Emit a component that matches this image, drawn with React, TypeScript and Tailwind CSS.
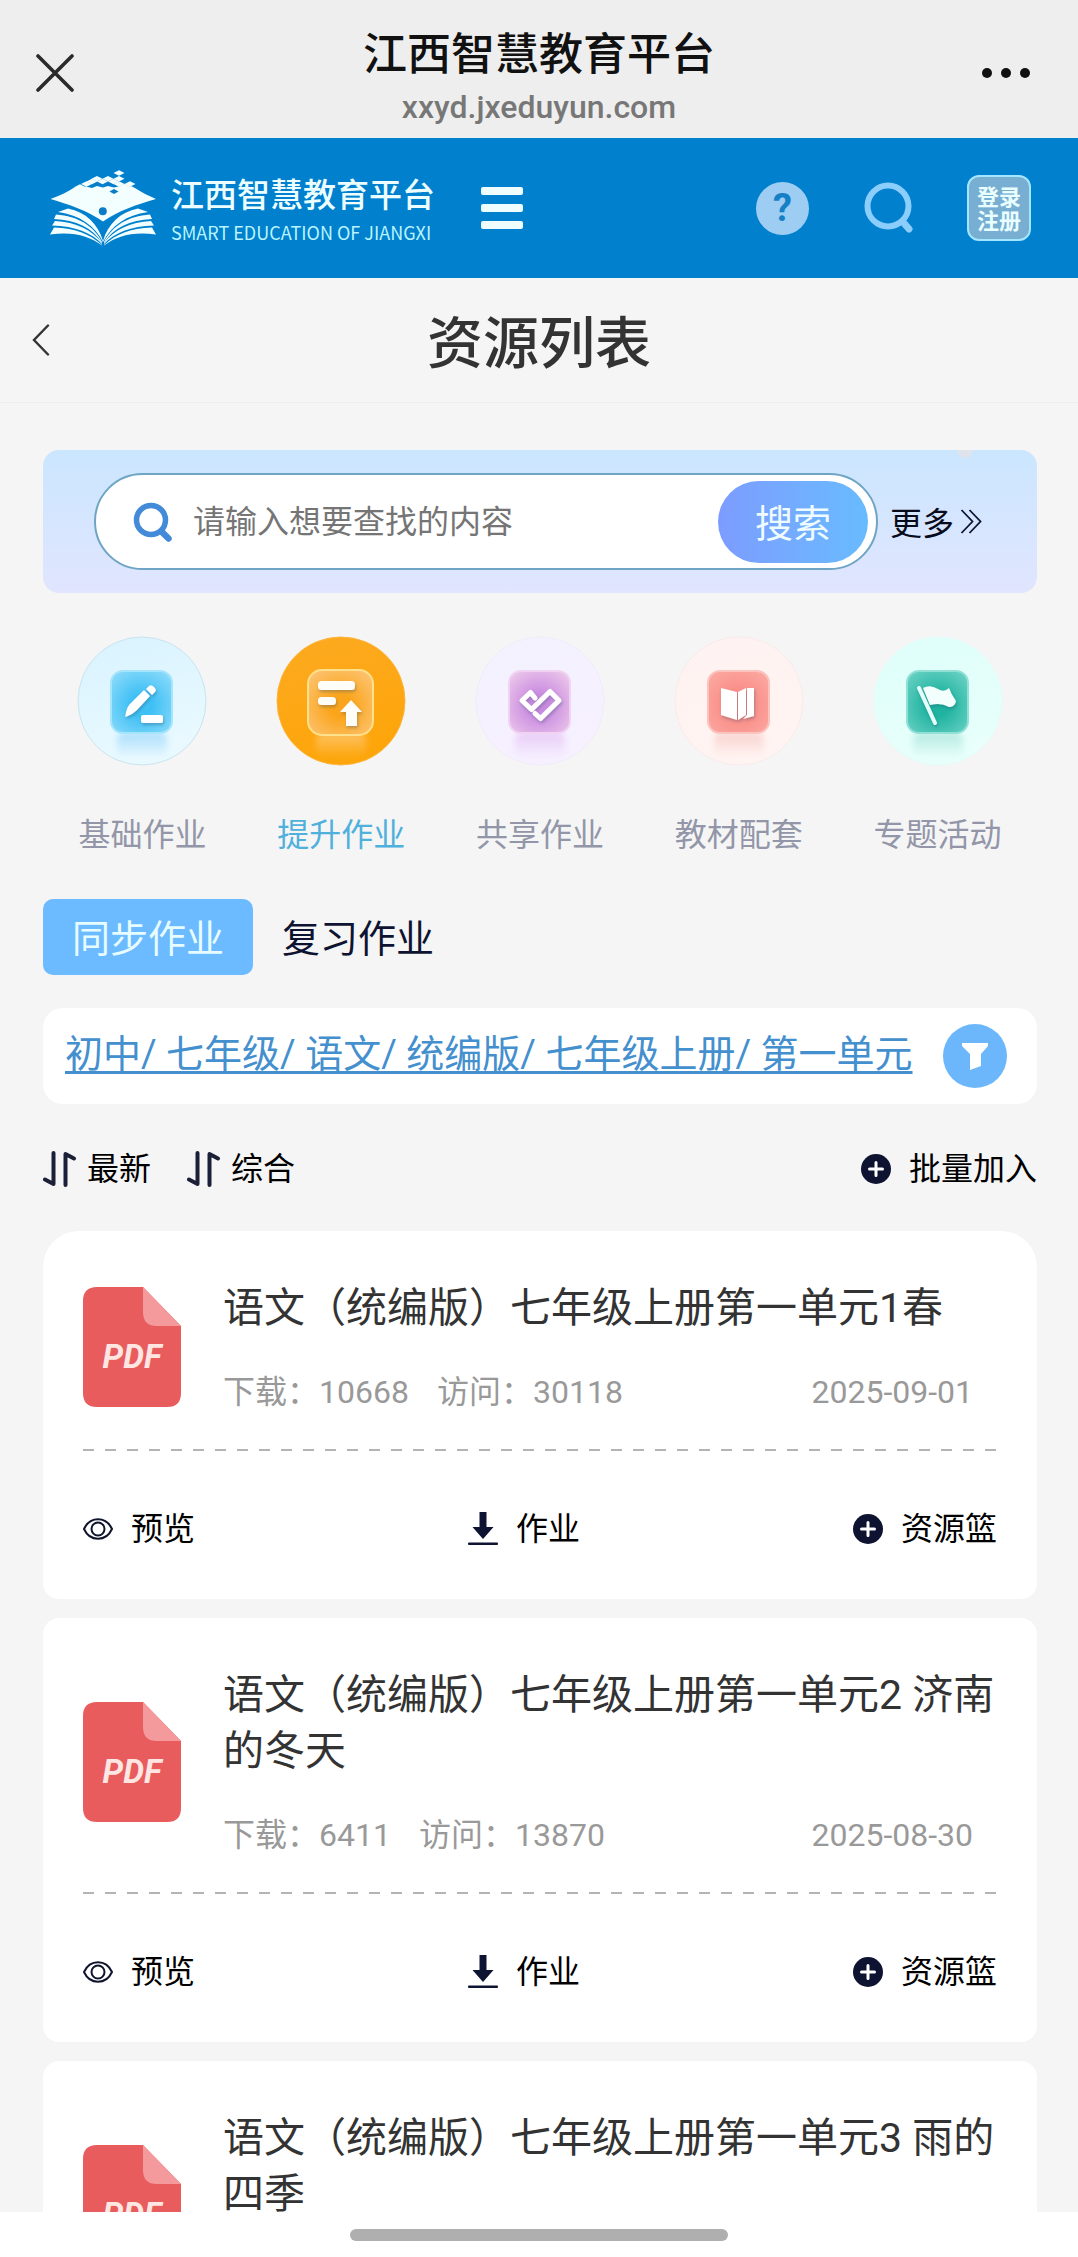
import React from "react";

function Logo() {
  const pixels = [
    [36.5, 14],
    [47, 8.7],
    [58, 8.7],
    [69, 3],
    [69, 8.7],
    [80, 14],
    [52.5, 11.5],
    [63.5, 11.5],
    [42, 11.5],
    [69, 14],
    [30, 17],
    [74.5, 16.5],
  ];
  return (
    <svg width="107" height="76" viewBox="0 0 107 76" fill="#f3feff" aria-hidden="true">
      <path d="M0.5 29 C9 26 18 22 25 17 L30 18.5 L36 16.5 L42 18 L47 16 L53 17.5 L58 16 L64 17.5 L70 16 L75 18 L81 16 L85 18 C91 22 99 26 106 29 C88 34 68 41 53 51.5 C38 41 18 34 0.5 29 Z" />
      {pixels.map(([x, y], i) => (
        <path key={i} d={`M${x - 5.5} ${y} L${x} ${y - 2.8} L${x + 5.5} ${y} L${x} ${y + 2.8} Z`} />
      ))}
      <path d="M59.5 21.5 L64 19 L68.5 21.5 L64 24 Z" fill="#0d7cc6" />
      <path d="M43.5 14 L47 12.2 L50.5 14 L47 15.8 Z M54.5 14 L58 12.2 L61.5 14 L58 15.8 Z" fill="#0d7cc6" />
      <circle cx="52.8" cy="41.3" r="4" fill="#0d7cc6" />
      <g>
        <path d="M53 71 C48 54 36 42 18 38.5 L8 42 C30 45 45 56 53 72 Z" />
        <path d="M52 72 C44 56 28 46 6 44.5 L4 49 C26 50 43 58 52 73 Z" />
        <path d="M52 73 C42 60 26 52 5 51 L2 55.5 C25 56 42 63 52 74 Z" />
        <path d="M52 75 C40 64 26 58.5 4 57.5 L0 64.5 C22 61 40 66 52 75.5 Z" />
      </g>
      <g transform="translate(106 0) scale(-1 1)">
        <path d="M53 71 C48 54 36 42 18 38.5 L8 42 C30 45 45 56 53 72 Z" />
        <path d="M52 72 C44 56 28 46 6 44.5 L4 49 C26 50 43 58 52 73 Z" />
        <path d="M52 73 C42 60 26 52 5 51 L2 55.5 C25 56 42 63 52 74 Z" />
        <path d="M52 75 C40 64 26 58.5 4 57.5 L0 64.5 C22 61 40 66 52 75.5 Z" />
      </g>
    </svg>
  );
}

type Skin = {
  id: string;
  disc: [string, string];
  rim: string;
  tile: [string, string];
  edge: string;
  glow: string;
  big?: boolean;
};

function CategoryIcon({ skin, children }: { skin: Skin; children: React.ReactNode }) {
  const t = skin.big ? { x: -33, y: -31, w: 65, h: 65, r: 14 } : { x: -31, y: -30, w: 61, h: 62, r: 12 };
  return (
    <svg width="132" height="132" viewBox="-66 -66 132 132" aria-hidden="true">
      <defs>
        <linearGradient id={`${skin.id}-disc`} x1="0" y1="0" x2="0.3" y2="1">
          <stop offset="0" stopColor={skin.disc[0]} />
          <stop offset="1" stopColor={skin.disc[1]} />
        </linearGradient>
        <radialGradient id={`${skin.id}-tile`} cx="0.5" cy="0.55" r="0.7">
          <stop offset="0.25" stopColor={skin.tile[0]} />
          <stop offset="1" stopColor={skin.tile[1]} />
        </radialGradient>
        <linearGradient id={`${skin.id}-glow`} x1="0" y1="0" x2="0" y2="1">
          <stop offset="0" stopColor={skin.glow} stopOpacity="0.7" />
          <stop offset="1" stopColor={skin.glow} stopOpacity="0" />
        </linearGradient>
        <filter id={`${skin.id}-soft`} x="-20%" y="-40%" width="140%" height="180%">
          <feGaussianBlur stdDeviation="3" />
        </filter>
        <filter id={`${skin.id}-drop`} x="-30%" y="-30%" width="160%" height="160%">
          <feDropShadow dx="1" dy="2" stdDeviation="1.5" floodColor="#204060" floodOpacity="0.3" />
        </filter>
      </defs>
      <circle r="64" fill={`url(#${skin.id}-disc)`} stroke={skin.rim} strokeWidth="1" />
      <rect x="-25" y="31" width="50" height="26" rx="8" fill={`url(#${skin.id}-glow)`} filter={`url(#${skin.id}-soft)`} />
      <rect x={t.x} y={t.y} width={t.w} height={t.h} rx={t.r} fill={`url(#${skin.id}-tile)`} stroke={skin.edge} strokeWidth="2" />
      <g filter={`url(#${skin.id}-drop)`}>{children}</g>
    </svg>
  );
}

const categories = [
  {
    label: "基础作业",
    skin: { id: "basic", disc: ["#d8f3ff", "#e9f9ff"], rim: "#c9e4ee", tile: ["#3fc0f5", "#8fdcfa"], edge: "#a5e5fc", glow: "#8ed2fa" } as Skin,
    art: (
      <g fill="#fff">
        <path d="M-16 15 Q-15 8 -12 4 L2 -10 L7 -5 L-6 9 Q-10 13 -16 15 Z" strokeLinejoin="round" stroke="#fff" strokeWidth="1.5" />
        <path d="M4 -12 L7 -15 Q9 -17 12 -14 Q15 -11 13 -9 L10 -6 Z" />
        <rect x="-1" y="14" width="22" height="8" rx="2" />
      </g>
    ),
  },
  {
    label: "提升作业",
    active: true,
    skin: { id: "raise", disc: ["#fdaa22", "#fda50a"], rim: "#fdb53a", tile: ["#fba51c", "#fdc679"], edge: "#ffe08c", glow: "#fdd08c", big: true } as Skin,
    art: (
      <g fill="#fffdf8">
        <rect x="-23" y="-20" width="37" height="9" rx="3.5" />
        <rect x="-23" y="-4" width="18" height="8" rx="3.5" />
        <path d="M10 -1 L21 11 H16 V25 H5 V11 H-1 Z" />
      </g>
    ),
  },
  {
    label: "共享作业",
    skin: { id: "share", disc: ["#f4f2ff", "#f6f0ff"], rim: "#f1ecfb", tile: ["#c98be0", "#eecbeb"], edge: "#f0d3f3", glow: "#e3b9f2" } as Skin,
    art: (
      <path
        d="M-5 -3 L-9.5 -8.5 L-18 -0.5 L-8.5 8.5 L10 -9.5 L19 -0.5 L0.5 17.5 L-5 12.5"
        fill="none"
        stroke="#fff"
        strokeWidth="5"
        strokeLinecap="round"
        strokeLinejoin="round"
      />
    ),
  },
  {
    label: "教材配套",
    skin: { id: "book", disc: ["#fff2f2", "#fff4f2"], rim: "#fbeaea", tile: ["#f98b84", "#fcaaa4"], edge: "#fbc3be", glow: "#f5c4c0" } as Skin,
    art: (
      <g fill="#fff">
        <path d="M-18 -13 L-2 -9 V19 L-18 14 Z" />
        <path d="M-1 -9 L7 -13 V14 L-1 19 Z" />
        <path d="M8 -13 H15 V15 L4 18 L8 14 Z" />
      </g>
    ),
  },
  {
    label: "专题活动",
    skin: { id: "topic", disc: ["#defffa", "#e8fffb"], rim: "#e4fdf8", tile: ["#1fb3a0", "#6ed3c6"], edge: "#90e0d5", glow: "#9edfd5" } as Skin,
    art: (
      <g fill="#f3fffd">
        <path d="M-19 -13 L-3 22" stroke="#e4fffb" strokeWidth="4" strokeLinecap="round" />
        <path d="M-15 -13 Q-8 -17 0 -12 Q6 -8 11 -13 Q13 -7 18 0 Q17 6 11 6 Q3 1 -8 4 Z" />
      </g>
    ),
  },
];

function PdfIcon() {
  return (
    <div className="relative h-[120px] w-[98px] shrink-0">
      <svg width="98" height="120" viewBox="0 0 98 120" aria-hidden="true">
        <path d="M14 0 H60 L98 39 V106 Q98 120 84 120 H14 Q0 120 0 106 V14 Q0 0 14 0 Z" fill="#e85c5d" />
        <path d="M60 0 L98 39 H74 Q60 39 60 25 Z" fill="#f49a9d" />
      </svg>
      <span className="absolute inset-x-0 top-[52px] text-center text-[33px] leading-9 font-bold text-[#ffe6e2] italic">PDF</span>
    </div>
  );
}

function PlusDot() {
  return (
    <svg width="30" height="30" viewBox="0 0 30 30" aria-hidden="true">
      <circle cx="15" cy="15" r="15" fill="#0d1330" />
      <path d="M15 8.5 V21.5 M8.5 15 H21.5" stroke="#fff" strokeWidth="3" strokeLinecap="round" />
    </svg>
  );
}

function EyeIcon() {
  return (
    <svg width="30" height="24" viewBox="0 0 30 24" fill="none" stroke="#10152e" strokeWidth="2" aria-hidden="true">
      <path d="M1 12 C7 -1 23 -1 29 12 C23 25 7 25 1 12 Z" />
      <circle cx="15" cy="12" r="6.5" />
    </svg>
  );
}

function DownloadIcon() {
  return (
    <svg width="30" height="34" viewBox="0 0 30 34" fill="#0d1330" aria-hidden="true">
      <path d="M11.5 0 H18.5 V15 H25.5 L15 27 L4.5 15 H11.5 Z" />
      <rect x="0" y="30.5" width="30" height="2.5" rx="1" />
    </svg>
  );
}

function SortIcon() {
  return (
    <svg width="34" height="36" viewBox="0 0 34 36" fill="none" stroke="#1b2038" strokeWidth="4" strokeLinecap="round" strokeLinejoin="round" aria-hidden="true">
      <path d="M10.5 2 V33 L2 28.5" />
      <path d="M22.5 34 V3 L31 7.5" />
    </svg>
  );
}

type Resource = { title: string; downloads?: number; visits?: number; date?: string };

const resources: Resource[] = [
  { title: "语文（统编版）七年级上册第一单元1春", downloads: 10668, visits: 30118, date: "2025-09-01" },
  { title: "语文（统编版）七年级上册第一单元2 济南的冬天", downloads: 6411, visits: 13870, date: "2025-08-30" },
  { title: "语文（统编版）七年级上册第一单元3 雨的四季" },
];

function ResourceCard({ item }: { item: Resource }) {
  return (
    <li className="rounded-2xl bg-white px-10 pt-[49px] pb-12 first:rounded-t-[36px]">
      <div className="flex items-center gap-[42px]">
        <PdfIcon />
        <div className="min-w-0 flex-1">
          <h2 className="text-[41px] leading-14 text-[#333]">{item.title}</h2>
          <div className="mt-[34px] flex h-11 items-center text-[32px] leading-11 text-[#999]">
            {item.date && (
              <>
                <span>下载：{item.downloads}</span>
                <span className="ml-7">访问：{item.visits}</span>
                <time className="mr-6 ml-auto">{item.date}</time>
              </>
            )}
          </div>
        </div>
      </div>
      <div className="mt-[35px] h-0.5 bg-[repeating-linear-gradient(90deg,#b4b4b4_0_11px,transparent_11px_22px)]" />
      {item.date && (
        <div className="mt-14 flex items-center justify-between text-[32px] leading-11 text-black">
          <button className="flex items-center gap-[18px]">
            <EyeIcon />
            预览
          </button>
          <button className="flex items-center gap-[18px]">
            <DownloadIcon />
            作业
          </button>
          <button className="flex items-center gap-[18px]">
            <PlusDot />
            资源篮
          </button>
        </div>
      )}
    </li>
  );
}

export default function App() {
  return (
    <div className="flex h-screen flex-col bg-[#f5f5f5] font-['Roboto','Noto_Sans_CJK_SC',sans-serif] text-[#0d1330]">
      <div className="flex h-[138px] shrink-0 items-center justify-between bg-[#eee] pt-2 pr-12 pl-9">
        <button aria-label="关闭" className="w-12">
          <svg width="38" height="38" viewBox="0 0 38 38" stroke="#2a2a2a" strokeWidth="3.6" strokeLinecap="round" aria-hidden="true">
            <path d="M2 2 L36 36 M36 2 L2 36" />
          </svg>
        </button>
        <div className="flex flex-col items-center pt-3 pl-3">
          <div className="text-[44px] leading-14 font-medium text-[#111]">江西智慧教育平台</div>
          <div className="text-[32px] leading-12 font-medium text-[#777]">xxyd.jxeduyun.com</div>
        </div>
        <button aria-label="更多选项">
          <svg width="48" height="10" viewBox="0 0 48 10" fill="#111" aria-hidden="true">
            <circle cx="5" cy="5" r="5" />
            <circle cx="24" cy="5" r="5" />
            <circle cx="43" cy="5" r="5" />
          </svg>
        </button>
      </div>

      <header className="flex h-[140px] shrink-0 items-center bg-[#0080cd] pr-[47px] pl-[50px]">
        <a href="#home" className="flex items-center gap-3.5">
          <Logo />
          <span className="flex flex-col pt-2 text-[#ecfeff]">
            <span className="text-[33px] leading-10 font-medium">江西智慧教育平台</span>
            <span className="font-['Noto_Sans_CJK_SC',sans-serif] text-[18px] leading-8 text-[#b9f4ff]">SMART EDUCATION OF JIANGXI</span>
          </span>
        </a>
        <button aria-label="菜单" className="ml-[46px] flex w-[42px] flex-col gap-[9px]">
          <span className="h-2 rounded-xs bg-[#effdff]" />
          <span className="h-2 rounded-xs bg-[#effdff]" />
          <span className="h-2 rounded-xs bg-[#effdff]" />
        </button>
        <div className="ml-auto flex items-center gap-[54px]">
          <button aria-label="帮助" className="flex size-[53px] items-center justify-center rounded-full bg-[#9ecdf3] text-[38px] leading-none font-bold text-[#1480c6]">
            ?
          </button>
          <button aria-label="搜索">
            <svg width="50" height="52" viewBox="0 0 50 52" fill="none" stroke="#8bcdfb" strokeWidth="6" strokeLinecap="round" aria-hidden="true">
              <circle cx="25" cy="24" r="20.5" />
              <path d="M40 40 L46 47" strokeWidth="7" />
            </svg>
          </button>
          <button className="flex h-[66px] w-16 flex-col items-center justify-center rounded-xl border-2 border-[#a3e6ff] bg-[#78aed2] pt-1 text-[22px] leading-6 font-bold text-[#e9feff]">
            <span>登录</span>
            <span>注册</span>
          </button>
        </div>
      </header>

      <main className="flex min-h-0 flex-1 flex-col overflow-y-auto [scrollbar-width:none]">
        <div className="flex h-[125px] shrink-0 items-center justify-between border-b border-[#eee] px-8">
          <button aria-label="返回" className="w-5">
            <svg width="18" height="32" viewBox="0 0 18 32" fill="none" stroke="#333" strokeWidth="2.4" strokeLinecap="round" aria-hidden="true">
              <path d="M16 1.5 L2 16 L16 30.5" />
            </svg>
          </button>
          <h1 className="pt-2 text-[56px] leading-20 font-medium text-[#333]">资源列表</h1>
          <span className="w-5" />
        </div>

        <div className="flex flex-col pt-[47px] pr-[41px] pb-12 pl-[43px]">
          <form className="relative flex h-[143px] items-center rounded-2xl bg-linear-to-b from-[#cae6fe] to-[#e1e5ff] pr-[55px] pl-[51px]">
            <div className="absolute top-0 right-16 h-2 w-4 rounded-b-full bg-[#f3dfd8]/50" />
            <div className="flex h-[97px] flex-1 items-center rounded-full border-2 border-[#6fa5c4] bg-white pr-2 pl-[37px]">
              <svg width="40" height="40" viewBox="0 0 40 40" fill="none" stroke="#438ad8" strokeWidth="5.5" strokeLinecap="round" aria-hidden="true">
                <circle cx="18" cy="18" r="14.5" />
                <path d="M29 30 L35.5 36.5" strokeWidth="6.5" />
              </svg>
              <input
                type="text"
                aria-label="搜索内容"
                placeholder="请输入想要查找的内容"
                className="ml-5 h-16 min-w-0 flex-1 bg-transparent text-[32px] text-[#333] outline-none placeholder:text-[#757575]"
              />
              <button type="button" className="h-[82px] w-[150px] rounded-full bg-linear-to-r from-[#7c9cff] to-[#68bbff] pt-1 text-[38px] leading-none text-[#eefcff]">
                搜索
              </button>
            </div>
            <a href="#more" className="ml-3 flex items-center gap-1.5 pt-1 text-[32px] leading-11 text-[#080b1c]">
              更多
              <svg width="22" height="26" viewBox="0 0 22 26" fill="none" stroke="#0d1330" strokeWidth="1.8" className="mb-1" aria-hidden="true">
                <path d="M1.5 1 L12.5 12.5 L1.5 24" />
                <path d="M9.5 1 L20.5 12.5 L9.5 24" />
              </svg>
            </a>
          </form>

          <nav className="mt-[42px] grid grid-cols-5">
            {categories.map((c) => (
              <a
                key={c.label}
                href={`#${c.skin.id}`}
                className={c.active ? "flex flex-col items-center text-[#50b0dc]" : "flex flex-col items-center text-[#9396a8]"}
              >
                <CategoryIcon skin={c.skin}>{c.art}</CategoryIcon>
                <span className="mt-[46px] text-[32px] leading-11">{c.label}</span>
              </a>
            ))}
          </nav>

          <div className="mt-[42px] flex text-[38px] leading-[72px]">
            <button className="rounded-[10px] bg-[#6cbaff] px-[29px] pt-1 text-[#e6fcff]">同步作业</button>
            <button className="px-[29px] pt-1">复习作业</button>
          </div>

          <div className="mt-[33px] flex h-24 items-center justify-between rounded-[20px] bg-white pr-[30px] pl-[22px]">
            <a href="#filter" className="pb-1 text-[38px] leading-14 text-[#448fce] underline decoration-[3px] underline-offset-4 [text-decoration-skip-ink:none]">
              初中/ 七年级/ 语文/ 统编版/ 七年级上册/ 第一单元
            </a>
            <button aria-label="筛选" className="flex size-16 items-center justify-center rounded-full bg-[#6cb7fb]">
              <svg width="28" height="28" viewBox="0 0 28 28" fill="#fff" aria-hidden="true">
                <path d="M1 1 H27 V4 L20 12 V24 L9 28 V12 L1 4 Z" />
              </svg>
            </button>
          </div>

          <div className="mt-[43px] flex items-center text-[32px] leading-11 text-black">
            <button className="flex items-center gap-2.5">
              <SortIcon />
              最新
            </button>
            <button className="ml-9 flex items-center gap-2.5">
              <SortIcon />
              综合
            </button>
            <button className="ml-auto flex items-center gap-[18px]">
              <PlusDot />
              批量加入
            </button>
          </div>

          <ul className="mt-10 flex flex-col gap-[19px]">
            {resources.map((r) => (
              <ResourceCard key={r.title} item={r} />
            ))}
          </ul>
        </div>
      </main>

      <footer className="flex h-[45px] shrink-0 items-center justify-center bg-white">
        <div className="h-3 w-[35%] rounded-full bg-[#afafaf]" />
      </footer>
    </div>
  );
}
